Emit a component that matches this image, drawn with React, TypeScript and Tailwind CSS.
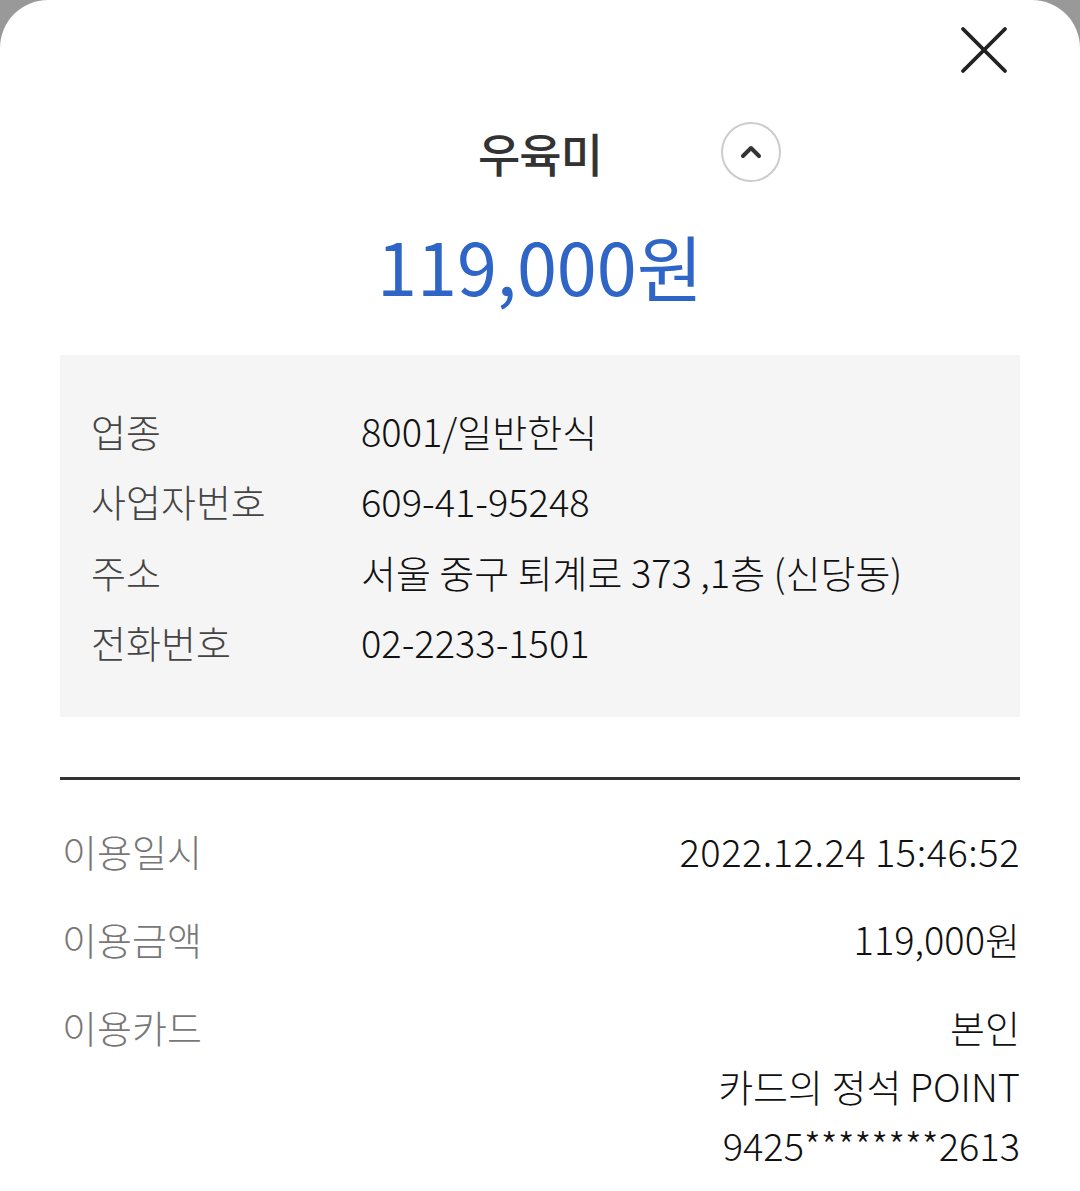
import { X, ChevronUp } from 'lucide-react';

const font = { fontFamily: '"Noto Sans CJK KR", "Noto Sans", sans-serif' };

const infoRows = [
    ['업종', '8001/일반한식'],
    ['사업자번호', '609-41-95248'],
    ['주소', '서울 중구 퇴계로 373 ,1층 (신당동)'],
    ['전화번호', '02-2233-1501'],
];

export default function App() {
    return (
        <div className="w-[1080px] h-[1191px] bg-[#999999] overflow-hidden" style={font}>
            <div className="h-full bg-white rounded-t-[48px] px-[60px] flex flex-col">
                <div className="flex justify-end pt-[8px] -mr-[6px] h-[100px]">
                    <X size={84} strokeWidth={1.1} className="text-[#222]" />
                </div>

                <div className="relative flex justify-center items-center mt-[20px] h-[64px]">
                    <h1 className="text-[46px] font-medium text-[#333] tracking-[-1px] leading-none">우육미</h1>
                    <div className="absolute left-[661px] top-[2px] w-[60px] h-[60px] rounded-full border-2 border-[#cccccc] flex items-center justify-center">
                        <ChevronUp size={32} strokeWidth={3} className="text-[#333]" />
                    </div>
                </div>

                <div className="text-center text-[72px] font-normal text-[#2f65c7] leading-none mt-[45px] tracking-[0px]">
                    119,000원
                </div>

                <div className="bg-[#f5f5f5] mt-[54px] h-[362px] pt-[40px] px-[31px]">
                    {infoRows.map(([label, value]) => (
                        <div key={label} className="flex items-center h-[70.5px] text-[38px] font-light">
                            <span className="w-[270px] text-[#444]">{label}</span>
                            <span className="text-[#111]">{value}</span>
                        </div>
                    ))}
                </div>

                <div className="mt-[60px] border-t-[3px] border-[#333]" />

                <div className="pt-[45px] text-[38px] font-light">
                    <div className="flex justify-between items-center h-[50px]">
                        <span className="text-[#777] pl-[2px]">이용일시</span>
                        <span className="text-[#111] tracking-[0.5px]">2022.12.24 15:46:52</span>
                    </div>
                    <div className="flex justify-between items-center h-[50px] mt-[38px]">
                        <span className="text-[#777] pl-[2px]">이용금액</span>
                        <span className="text-[#111]">119,000원</span>
                    </div>
                    <div className="flex justify-between mt-[38px]">
                        <span className="text-[#777] pl-[2px] h-[50px] flex items-center">이용카드</span>
                        <div className="flex flex-col items-end text-[#111]">
                            <span className="h-[50px] flex items-center">본인</span>
                            <span className="h-[50px] flex items-center mt-[9px]">카드의 정석 POINT</span>
                            <span className="h-[50px] flex items-center mt-[9px]">9425********2613</span>
                        </div>
                    </div>
                </div>
            </div>
        </div>
    );
}
